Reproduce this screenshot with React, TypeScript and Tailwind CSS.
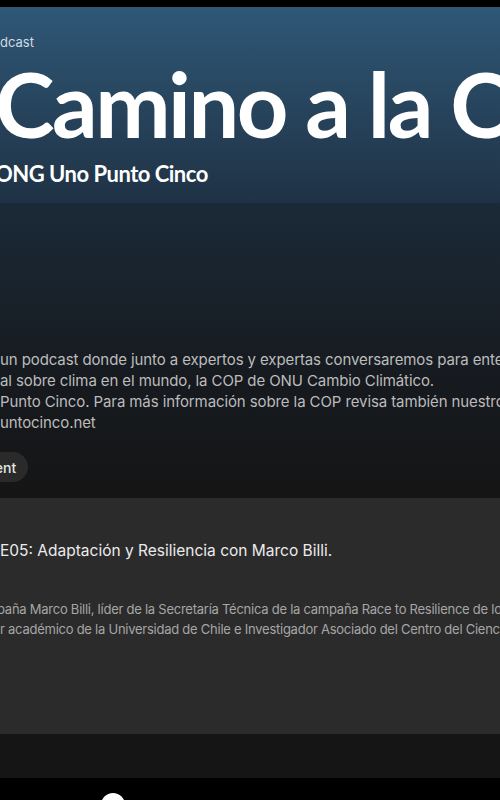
import React from "react";

export default function App() {
  return (
    <div className="w-[500px] h-[800px] overflow-hidden bg-[#151515] flex flex-col font-['Inter',sans-serif]">
      <div className="h-[7px] shrink-0 bg-black" />
      <header className="h-[196px] shrink-0 overflow-hidden bg-gradient-to-b from-[#2f5877] to-[#1f3245] flex flex-col">
        <div className="mt-[27px] text-[13px] leading-[16px] text-[#d3dbe2] whitespace-nowrap">dcast</div>
        <h1 className="mt-[17px] -ml-[5px] text-[90px] leading-[72px] font-['Lato',sans-serif] font-bold tracking-[-2.5px] text-white whitespace-nowrap">
          Camino a la COP
        </h1>
        <div className="mt-[22px] -ml-[5px] text-[22px] leading-[26px] font-['Lato',sans-serif] font-bold tracking-[-0.5px] text-white whitespace-nowrap">
          ONG Uno Punto Cinco
        </div>
      </header>
      <section className="shrink-0 bg-gradient-to-b from-[#1b2a38] via-[#161a1f] via-60% to-[#151515] pt-[146px] h-[295px] flex flex-col">
        <div className="text-[15px] leading-[21px] tracking-[-0.1px] text-[#bcbcbc] whitespace-nowrap">
          <div>un podcast donde junto a expertos y expertas conversaremos para entender</div>
          <div>al sobre clima en el mundo, la COP de ONU Cambio Climático.</div>
          <div>Punto Cinco. Para más información sobre la COP revisa también nuestro informe</div>
          <div>untocinco.net</div>
        </div>
        <div className="mt-[19px] flex">
          <div className="-ml-[49px] h-[30px] rounded-full bg-[#2a2a2a] pl-[12px] pr-[12px] flex items-center text-[14px] text-[#e6e6e6] font-medium">
            Content
          </div>
        </div>
      </section>
      <section className="shrink-0 h-[236px] bg-[#2b2b2b] flex flex-col">
        <div className="mt-[43px] text-[15.5px] leading-[20px] text-[#ebebeb] whitespace-nowrap">
          E05: Adaptación y Resiliencia con Marco Billi.
        </div>
        <div className="mt-[38px] -ml-[3px] text-[13px] leading-[20px] tracking-[-0.25px] text-[#a6a6a6] whitespace-nowrap">
          <div>paña Marco Billi, líder de la Secretaría Técnica de la campaña Race to Resilience de los</div>
          <div className="ml-[3px]">r académico de la Universidad de Chile e Investigador Asociado del Centro del Ciencia</div>
        </div>
      </section>
      <div className="shrink-0 h-[44px] bg-[#151515]" />
      <div className="flex-1 bg-black relative">
        <div className="absolute left-[101px] top-[15px] w-[24px] h-[24px] rounded-full bg-white" />
      </div>
    </div>
  );
}
